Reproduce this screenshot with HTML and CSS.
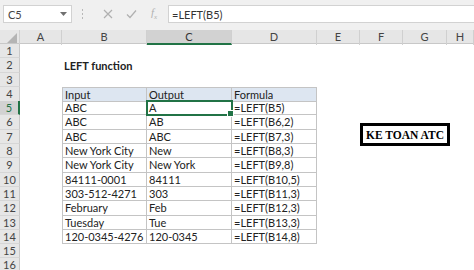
FILE: index.html
```html
<!DOCTYPE html>
<html>
<head>
<meta charset="utf-8">
<link rel="stylesheet" href="styles.css">
</head>
<body>
<div class="app">
  <div class="fbar">
    <div class="namebox">
      <span class="nb-text">C5</span>
      <svg class="caret" width="7" height="4" viewBox="0 0 7 4"><path d="M0 0H7L3.5 4Z" fill="#707070"/></svg>
    </div>
    <div class="grip">
      <span></span><span></span><span></span>
    </div>
    <div class="ficons">
      <svg width="10" height="10" viewBox="0 0 10 10"><path d="M1 1L9 9M9 1L1 9" stroke="#b0b0b0" stroke-width="1.2" fill="none"/></svg>
      <svg width="11" height="10" viewBox="0 0 11 10"><path d="M1 5.5L4 8.5L10 1.5" stroke="#b0b0b0" stroke-width="1.2" fill="none"/></svg>
      <span class="fx">f<sub>x</sub></span>
    </div>
    <div class="formula">=LEFT(B5)</div>
  </div>

  <div class="sheet">
    <div class="row hdr">
      <div class="corner"><svg width="10" height="10" viewBox="0 0 10 10"><path d="M10 0V10H0Z" fill="#b4b4b4"/></svg></div>
      <div class="ch">A</div><div class="ch">B</div><div class="ch active">C</div><div class="ch">D</div><div class="ch">E</div><div class="ch">F</div><div class="ch">G</div><div class="ch">H</div>
    </div>

    <div class="row"><div class="rh">1</div></div>
    <div class="row"><div class="rh">2</div><div class="c"></div><div class="c title">LEFT function</div></div>
    <div class="row"><div class="rh">3</div></div>
    <div class="row"><div class="rh">4</div><div class="c"></div><div class="c t th tl tt">Input</div><div class="c t th tt">Output</div><div class="c t th tt">Formula</div></div>
    <div class="row"><div class="rh active">5</div><div class="c"></div><div class="c t tl">ABC</div><div class="c t sel">A</div><div class="c t">=LEFT(B5)</div></div>
    <div class="row"><div class="rh">6</div><div class="c"></div><div class="c t tl">ABC</div><div class="c t">AB</div><div class="c t">=LEFT(B6,2)</div></div>
    <div class="row"><div class="rh">7</div><div class="c"></div><div class="c t tl">ABC</div><div class="c t">ABC</div><div class="c t">=LEFT(B7,3)</div></div>
    <div class="row"><div class="rh">8</div><div class="c"></div><div class="c t tl">New York City</div><div class="c t">New</div><div class="c t">=LEFT(B8,3)</div></div>
    <div class="row"><div class="rh">9</div><div class="c"></div><div class="c t tl">New York City</div><div class="c t">New York</div><div class="c t">=LEFT(B9,8)</div></div>
    <div class="row"><div class="rh">10</div><div class="c"></div><div class="c t tl">84111-0001</div><div class="c t">84111</div><div class="c t">=LEFT(B10,5)</div></div>
    <div class="row"><div class="rh">11</div><div class="c"></div><div class="c t tl">303-512-4271</div><div class="c t">303</div><div class="c t">=LEFT(B11,3)</div></div>
    <div class="row"><div class="rh">12</div><div class="c"></div><div class="c t tl">February</div><div class="c t">Feb</div><div class="c t">=LEFT(B12,3)</div></div>
    <div class="row"><div class="rh">13</div><div class="c"></div><div class="c t tl">Tuesday</div><div class="c t">Tue</div><div class="c t">=LEFT(B13,3)</div></div>
    <div class="row"><div class="rh">14</div><div class="c"></div><div class="c t tl">120-0345-4276</div><div class="c t">120-0345</div><div class="c t">=LEFT(B14,8)</div></div>
    <div class="row"><div class="rh">15</div></div>
    <div class="row"><div class="rh">16</div></div>

    <div class="stamp">KE TOAN ATC</div>
  </div>
</div>
</body>
</html>
```

FILE: styles.css
```css
* { box-sizing: border-box; }
html, body { margin: 0; padding: 0; }
body {
  width: 474px;
  height: 270px;
  overflow: hidden;
  background: #ffffff;
  font-family: "Lato", "Liberation Sans", sans-serif;
}
.app { width: 474px; height: 270px; overflow: hidden; }

.fbar {
  height: 30px;
  background: #f0f0f0;
  display: flex;
  align-items: flex-start;
  padding: 5px 0 0 3px;
}
.namebox {
  width: 69px;
  height: 18px;
  background: #fff;
  border: 1px solid #d2d2d2;
  display: flex;
  align-items: center;
  justify-content: space-between;
  padding: 0 4px 0 4px;
  font-size: 11px;
  color: #444;
}
.grip {
  width: 20px;
  height: 18px;
  display: flex;
  flex-direction: column;
  align-items: center;
  justify-content: center;
  gap: 2px;
}
.grip span { width: 1px; height: 2px; background: #b8b8b8; display: block; }
.ficons {
  width: 76px;
  height: 18px;
  display: flex;
  align-items: center;
  justify-content: space-around;
  padding: 0 4px;
}
.fx {
  font-family: "Liberation Serif", serif;
  font-style: italic;
  font-size: 11px;
  color: #b0b0b0;
}
.fx sub { font-size: 7px; }
.formula {
  flex: 1;
  height: 18px;
  background: #fff;
  border: 1px solid #d2d2d2;
  border-right: none;
  font-size: 11px;
  color: #333;
  display: flex;
  align-items: center;
  padding-left: 3px;
}

.sheet { position: relative; }
.row {
  display: grid;
  grid-template-columns: 20px 42px 85px 85px 85px 43px 43px 44px 1fr;
  height: 14.3px;
}
.row.hdr { height: 14px; background: #e6e6e6; border-bottom: 1px solid #c8c8c8; }
.corner {
  display: flex;
  align-items: flex-end;
  justify-content: flex-end;
  padding: 0 2px 2px 0;
  border-right: 1px solid #d0d0d0;
}
.ch {
  font-size: 11px;
  color: #444;
  text-align: center;
  line-height: 13px;
  border-right: 1px solid #d0d0d0;
}
.ch.active {
  background: #d2d2d2;
  border-bottom: 2px solid #217346;
  color: #333;
}
.rh {
  background: #e6e6e6;
  border-right: 1px solid #c8c8c8;
  border-bottom: 1px solid #d6d6d6;
  font-size: 11px;
  color: #444;
  text-align: center;
  line-height: 13px;
}
.rh.active {
  background: #d2d2d2;
  border-right: 2px solid #217346;
  color: #217346;
}
.c {
  font-size: 11px;
  color: #222;
  line-height: 13px;
  padding-left: 2px;
  white-space: nowrap;
}
.title { font-weight: bold; padding-top: 1px; }
.t {
  border-right: 1px solid #c4c4c4;
  border-bottom: 1px solid #c4c4c4;
}
.tl { border-left: 1px solid #c4c4c4; }
.tt { border-top: 1px solid #c4c4c4; }
.th { background: #dde6f1; }
.sel {
  position: relative;
  outline: 2px solid #217346;
  outline-offset: -1px;
}
.sel::after {
  content: "";
  position: absolute;
  right: -3px;
  bottom: -3px;
  width: 5px;
  height: 5px;
  background: #217346;
  border: 1px solid #fff;
}
.stamp {
  position: absolute;
  left: 360px;
  top: 93px;
  width: 90px;
  height: 23px;
  border: 3px solid #000;
  font-family: "Liberation Serif", serif;
  font-weight: bold;
  font-size: 11.5px;
  color: #000;
  display: flex;
  align-items: center;
  justify-content: center;
  background: #fff;
}
```
